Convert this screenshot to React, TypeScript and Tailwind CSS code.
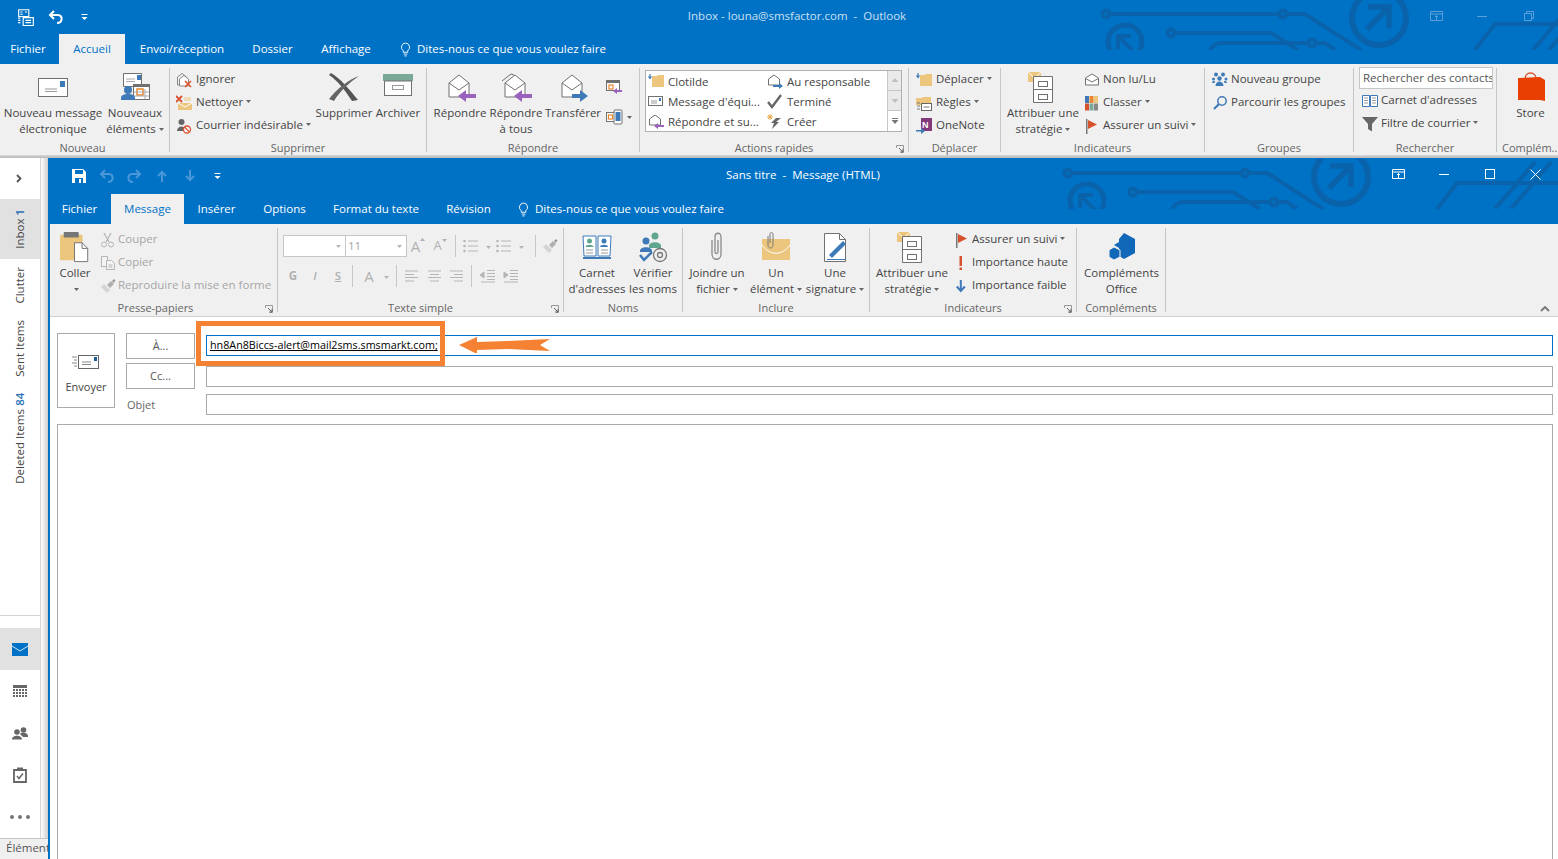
import type { ReactNode } from "react";

const BLUE = "#0072c6";
const INK = "#707070";
const TAN = "#ecc67c";
const STEEL = "#3f7ab8";
const PURPLE = "#9a62bd";
const RED = "#d8512e";

function S16({ children, className = "" }: { children: ReactNode; className?: string }) {
  return <svg viewBox="0 0 16 16" className={`h-[16px] w-[16px] shrink-0 ${className}`}>{children}</svg>;
}
function S32({ children, className = "" }: { children: ReactNode; className?: string }) {
  return <svg viewBox="0 0 32 32" className={`h-[32px] w-[32px] shrink-0 ${className}`}>{children}</svg>;
}

function Caret({ color = "#666" }: { color?: string }) {
  return (
    <svg viewBox="0 0 5 3" className="ml-[3px] inline-block h-[3px] w-[5px] align-middle">
      <path d="M0 0h5L2.500 3z" fill={color} />
    </svg>
  );
}

// ============================ Big icons ============================

const Envelope32 = () => (
  <S32>
    <rect x="1.500" y="7.500" width="29" height="18" fill="#fff" stroke={INK} />
    <rect x="23" y="10" width="5" height="6" fill={STEEL} />
    <path d="M8 18h12M8 20.500h12" stroke="#999" />
  </S32>
);
const NewItems32 = () => (
  <S32>
    <path d="M4.500 2.500h18v13h-18z" fill="#fff" stroke={INK} />
    <rect x="18" y="4" width="4" height="5" fill={STEEL} />
    <path d="M7 8h9M7 10.500h9" stroke="#aaa" />
    <rect x="14.500" y="13.500" width="16" height="15" fill="#fff" stroke={INK} />
    <rect x="14" y="13" width="17" height="3" fill={INK} />
    <rect x="18" y="18" width="6" height="6" fill="none" stroke="#e8852f" strokeWidth="1.500" />
    <path d="M26 18v10M15 21h15M15 25h15" stroke="#aaa" />
    <circle cx="9" cy="19" r="4" fill={STEEL} />
    <path d="M2 29v-2c0-3 3-4 7-4s7 1 7 4v2z" fill={STEEL} />
  </S32>
);
const DeleteX = () => (
  <S32>
    <path d="M3 2c9 5 19 17 27 27l-6 1C17 19 9 9 1 4z" fill="#555" />
    <path d="M31 5C21 8 9 18 1 28l5 2C12 20 22 11 31 5z" fill="#666" />
  </S32>
);
const Archive32 = () => (
  <S32>
    <rect x="1" y="3" width="30" height="7" fill="#7aa998" />
    <rect x="2.500" y="10" width="27" height="14.500" fill="#fff" stroke={INK} />
    <rect x="10.500" y="14.500" width="11" height="4" fill="none" stroke="#999" />
  </S32>
);
function OpenEnv({ extra = false }: { extra?: boolean }) {
  return (
    <>
      {extra && <path d="M2 10l9-7 3 1" fill="none" stroke={INK} />}
      <path d="M5 12l10-8 10 8v14H5z" fill="#fff" stroke={INK} />
      <path d="M5 12l10 7 10-7" fill="none" stroke={INK} />
    </>
  );
}
const ReplyIcon = ({ extra = false }: { extra?: boolean }) => (
  <S32>
    <OpenEnv extra={extra} />
    <path d="M14 25l8-6v4h10v4H22v4z" fill={PURPLE} />
  </S32>
);
const ForwardIcon = () => (
  <S32>
    <OpenEnv />
    <path d="M31 25l-8-6v4H15v4h8v4z" fill={STEEL} />
  </S32>
);
const Book32 = () => (
  <S32>
    <path d="M2 5h13v20H3z" fill="#fff" stroke={STEEL} />
    <path d="M17 5h13l-1 20H17z" fill="#fff" stroke={STEEL} />
    <path d="M2 26h28v2H2z" fill={STEEL} />
    <circle cx="8.500" cy="10" r="2.500" fill="#5fa58f" />
    <path d="M4.500 16c0-3 8-3 8 0z" fill="#5fa58f" />
    <circle cx="23" cy="10" r="2.500" fill={STEEL} />
    <path d="M19 16c0-3 8-3 8 0z" fill={STEEL} />
    <path d="M5 19h7M5 22h7M20 19h7M20 22h7" stroke="#999" />
  </S32>
);
const CheckNames = () => (
  <S32>
    <circle cx="18" cy="5" r="3.500" fill="#5fa58f" />
    <path d="M12 15c0-5 12-5 12 0v2H12z" fill="#5fa58f" />
    <circle cx="9" cy="10" r="3.500" fill={STEEL} />
    <path d="M3 20c0-5 12-5 12 0v1H3z" fill={STEEL} />
    <path d="M3 24l4 5 8-8" fill="none" stroke={STEEL} strokeWidth="2.500" />
    <circle cx="23" cy="24" r="6.500" fill="none" stroke="#777" strokeWidth="1.300" />
    <circle cx="23" cy="24" r="2.500" fill="none" stroke="#777" strokeWidth="1.300" />
  </S32>
);
const Clip32 = () => (
  <S32>
    <path d="M11 9v14c0 7 9 7 9 0V6c0-5-6-5-6 0v15c0 2 3 2 3 0V9" fill="none" stroke="#8a8a8a" strokeWidth="1.300" />
  </S32>
);
const ItemEnv = () => (
  <S32>
    <rect x="2" y="8" width="28" height="21" fill={TAN} />
    <path d="M2 14c8 11 20 11 28 0" fill="none" stroke="#fff" />
    <path d="M8 5v9c0 4 5 4 5 0V3c0-2-3-2-3 0v9" fill="none" stroke="#7a7a7a" />
  </S32>
);
const Signature = () => (
  <S32>
    <path d="M5.500 2.500h15l6 6v22h-21z" fill="#fff" stroke={INK} />
    <path d="M20.500 2.500v6h6" fill="none" stroke={INK} />
    <path d="M10 24L24 10l3 3-14 14z" fill={STEEL} />
    <path d="M8 28.500h18" stroke={STEEL} />
  </S32>
);
const Policy = () => (
  <S32>
    <rect x="1" y="1" width="13" height="10" fill={TAN} />
    <path d="M1 1l6.500 6L14 1" fill="none" stroke="#fff" />
    <path d="M6.500 5.500h19v26h-19z" fill="#fff" stroke={INK} />
    <path d="M6.500 18.500h19" stroke={INK} />
    <rect x="11.500" y="10.500" width="9" height="5" fill="none" stroke={INK} />
    <rect x="11.500" y="23.500" width="9" height="5" fill="none" stroke={INK} />
  </S32>
);
const AddIn = () => (
  <S32>
    <path d="M18 2l11 6v14l-11 6-5-3v-8l-5-3 5-3V8z" fill="#1268b8" />
    <path d="M8 16l6 3v7l-6 3-5-3v-7z" fill="#1268b8" stroke="#f0f0f0" />
  </S32>
);
const StoreBag = () => (
  <S32>
    <path d="M10 8c0-8 11-8 11 0" fill="none" stroke={RED} strokeWidth="1.500" />
    <path d="M3 7l22-1 5 3v21l-5-1H3z" fill="#e93f02" />
  </S32>
);
const Paste = () => (
  <svg viewBox="0 0 34 34" className="h-[32px] w-[32px]">
    <rect x="1" y="4" width="24" height="27" rx="1" fill={TAN} />
    <rect x="5" y="1" width="16" height="6" rx="1" fill="#777" />
    <path d="M16.500 12.500h8l6 6v14h-14z" fill="#fff" stroke={INK} />
    <path d="M24.500 12.500v6h6" fill="none" stroke={INK} />
  </svg>
);

// ============================ Small icons ============================

const Ignore = () => (
  <S16>
    <path d="M1.500 5L6 1.500 10.500 5v8h-9z" fill="none" stroke="#888" />
    <path d="M3.500 7L8 3.500 12.500 7v7h-9z" fill="#fff" stroke="#888" />
    <path d="M9 9l6 6M15 9l-6 6" stroke={RED} strokeWidth="1.600" />
  </S16>
);
const CleanUp = () => (
  <S16>
    <path d="M0 1l6 6M6 1L0 7" stroke={RED} strokeWidth="1.800" />
    <path d="M8 3h7M8 5h7" stroke={TAN} />
    <rect x="2" y="8" width="14" height="7" fill={TAN} />
    <path d="M2 8l7 4 7-4" fill="none" stroke="#fff" />
  </S16>
);
const Junk = () => (
  <S16>
    <circle cx="5.500" cy="4" r="3" fill="#666" />
    <path d="M1 13c0-6 9-6 9 0z" fill="#666" />
    <circle cx="11" cy="11.500" r="3.500" fill="#fff" stroke={RED} strokeWidth="1.300" />
    <path d="M8.500 9l5 5" stroke={RED} strokeWidth="1.300" />
  </S16>
);
const Folder = () => (
  <>
    <path d="M4 3h5l1-1h6v12H4z" fill={TAN} />
    <path d="M2 1v4M0.500 3.500L2 5.500l1.500-2" fill="none" stroke={STEEL} strokeWidth="1.200" />
  </>
);
const Move = () => <S16><Folder /></S16>;
const Rules = () => (
  <S16>
    <path d="M0 3h6l1-1h8v8H0z" fill={TAN} />
    <rect x="5.500" y="8.500" width="10" height="7" fill="#fff" stroke="#666" />
    <path d="M7.500 12h6M1 8h3M1 11h3M1 14h3" stroke="#777" />
  </S16>
);
const OneNote = () => (
  <S16>
    <rect x="5" y="0" width="11" height="13" fill="#80397b" />
    <text x="6" y="10" fontSize="9" fontWeight="700" fill="#fff" fontFamily="Liberation Sans, sans-serif">N</text>
    <path d="M0 12h5V9.500L9 13l-4 3v-2.500H0z" fill={STEEL} />
  </S16>
);
const Unread = () => (
  <S16>
    <path d="M1.500 6L8 2l6.500 4v7h-13z" fill="#fff" stroke={INK} />
    <path d="M1.500 6.500L8 10l6.500-3.500" fill="none" stroke={INK} />
  </S16>
);
const Categorize = () => (
  <S16>
    <rect x="1" y="1" width="4" height="7" fill={STEEL} />
    <rect x="5.500" y="1" width="4" height="7" fill="#e8852f" />
    <rect x="10" y="1" width="4" height="7" fill={TAN} />
    <rect x="1" y="8.500" width="4" height="7" fill={RED} />
    <rect x="5.500" y="8.500" width="4" height="7" fill="#7aa998" />
    <rect x="10" y="8.500" width="4" height="7" fill="#888" />
  </S16>
);
const Flag = () => (
  <S16>
    <rect x="2" y="1" width="1.500" height="15" fill="#777" />
    <path d="M4 2l9 4.500L4 11z" fill={RED} />
  </S16>
);
const NewGroup = () => (
  <S16>
    <circle cx="4" cy="2.500" r="2" fill={STEEL} />
    <circle cx="11" cy="2.500" r="2" fill={STEEL} />
    <circle cx="1.500" cy="7" r="1.500" fill={STEEL} />
    <circle cx="14" cy="7" r="1.500" fill={STEEL} />
    <circle cx="7.500" cy="6.500" r="2.200" fill={STEEL} />
    <path d="M3.500 14c0-6 8-6 8 0zM0 11c0-2 3-2.500 3-1.500L2.500 11zM15 11c0-2-3-2.500-3-1.500l.5 1.500z" fill={STEEL} />
  </S16>
);
const Browse = () => (
  <S16>
    <circle cx="10" cy="6" r="4.200" fill="none" stroke={STEEL} strokeWidth="1.500" />
    <path d="M7 9l-5 5" stroke={STEEL} strokeWidth="2.200" />
  </S16>
);
const BookSmall = () => (
  <S16>
    <path d="M0.500 2.500h7v11h-7zM8.500 2.500h7v11h-7z" fill="#fff" stroke={STEEL} />
    <path d="M2 5h4M2 7.500h4M2 10h4M10 5h4M10 7.500h4M10 10h4" stroke="#999" />
  </S16>
);
const Funnel = () => (
  <S16>
    <path d="M0 1h16L10 8v7.500L6 13V8z" fill="#666" />
  </S16>
);
const Cut = () => (
  <S16>
    <path d="M4 1l5 9M11 1L6 10" stroke="#b5b5b5" strokeWidth="1.300" />
    <circle cx="4" cy="12.500" r="2.500" fill="none" stroke="#b5b5b5" />
    <circle cx="11" cy="12.500" r="2.500" fill="none" stroke="#b5b5b5" />
  </S16>
);
const CopyIcon = () => (
  <S16>
    <path d="M1.500 1.500h6v10h-6z" fill="#f4f4f4" stroke="#b5b5b5" />
    <path d="M6.500 5.500h5l3 3v6h-8z" fill="#f4f4f4" stroke="#b5b5b5" />
    <path d="M8.500 10h4M8.500 12h4" stroke="#b5b5b5" />
  </S16>
);
const Painter = () => (
  <S16>
    <path d="M1 9l6 6 3-3-6-6z" fill="#d4d4d4" />
    <path d="M7 7l4-4 3 3-4 4z" fill="#b0b0b0" />
    <path d="M12 3l2-2 1.500 1.500L13.500 5z" fill="#999" />
  </S16>
);
const ExMark = () => (
  <S16>
    <rect x="5.500" y="1" width="2.500" height="10" fill={RED} />
    <rect x="5.500" y="12.500" width="2.500" height="2.500" fill={RED} />
  </S16>
);
const DownBlue = () => (
  <S16>
    <path d="M6.800 2v10M2.800 8.500l4 4.500 4-4.500" fill="none" stroke={STEEL} strokeWidth="2" />
  </S16>
);
const QuickFolder = () => <S16><Folder /></S16>;
const MiniEnv = () => (
  <S16>
    <rect x="0.500" y="3.500" width="14" height="9" fill="#fff" stroke={INK} />
    <path d="M3 8h6M3 10h6" stroke="#999" />
    <rect x="11" y="5" width="2" height="3" fill={STEEL} />
  </S16>
);
const QReply = () => (
  <S16>
    <path d="M1.500 6L7 2l5.500 4v6h-11z" fill="#fff" stroke={INK} />
    <path d="M6 13l4-3v2h6v2h-6v2z" fill={PURPLE} />
  </S16>
);
const QForward = () => (
  <S16>
    <path d="M1.500 6L7 2l5.500 4v6h-11z" fill="#fff" stroke={INK} />
    <path d="M16 13l-4-3v2H6v2h6v2z" fill={STEEL} />
  </S16>
);
const Check = () => (
  <S16>
    <path d="M1 9l4 5L14 2" fill="none" stroke="#666" strokeWidth="2.400" />
  </S16>
);
const Bolt = () => (
  <S16>
    <path d="M9 5h5l-5 4h3l-7 7 2-6H4z" fill="#666" />
    <path d="M3 1v6M0 4h6M1 2l4 4M5 2L1 6" stroke="#e8a94a" />
  </S16>
);
const MeetingReply = () => (
  <svg viewBox="0 0 16 16" className="h-[16px] w-[16px]">
    <rect x="0.500" y="1.500" width="13" height="10" fill="#fff" stroke={INK} />
    <rect x="0" y="1" width="14" height="3" fill={INK} />
    <rect x="3" y="6" width="4" height="4" fill="none" stroke="#e8852f" strokeWidth="1.200" />
    <path d="M7 12l4-3v2h5v2h-5v2z" fill={PURPLE} />
  </svg>
);
const MoreReply = () => (
  <svg viewBox="0 0 18 16" className="h-[16px] w-[18px]">
    <rect x="0.500" y="3.500" width="9" height="9" fill="#fff" stroke={INK} />
    <rect x="2.500" y="6" width="4" height="4" fill="none" stroke="#e8852f" strokeWidth="1.200" />
    <rect x="8" y="1" width="8" height="14" rx="1" fill="#fff" stroke={INK} />
    <rect x="9.500" y="3" width="5" height="9" fill={STEEL} />
  </svg>
);

// ============================ Window chrome ============================

function Circuit({ className }: { className: string }) {
  return (
    <svg viewBox="1098 0 502 50" className={`pointer-events-none absolute h-[50px] w-[502px] ${className}`} fill="none" stroke="#0a63aa" strokeWidth="4">
      <circle cx="1106" cy="14" r="3.500" />
      <path d="M1110 14h169M1287 14h18l56 36" />
      <circle cx="1283" cy="14" r="3.500" />
      <circle cx="1379" cy="18" r="27" strokeWidth="6" />
      <path d="M1368 7h21v21M1389 7l-22 22" strokeWidth="5.500" />
      <circle cx="1125" cy="42" r="17" strokeWidth="5" />
      <path d="M1131 36h-13v13M1118 36l16 16" strokeWidth="4" />
      <circle cx="1171" cy="33" r="3.500" />
      <path d="M1175 33h96l27 17" />
      <path d="M1210 50c3-5 6-7 11-7h87" />
      <circle cx="1312" cy="43" r="3.500" />
      <path d="M1316 43h9l10 7" />
      <path d="M1475 50l20-26h105" />
      <path d="M1533 50l40-47M1549 50l40-47" />
    </svg>
  );
}

function Tab({ children, className }: { children: ReactNode; className: string }) {
  return <div className={`flex h-full items-center whitespace-nowrap ${className}`}>{children}</div>;
}

const Bulb = () => (
  <svg viewBox="0 0 12 16" className="mr-[6px] h-[15px] w-[11px]">
    <path d="M6 1a4.500 4.500 0 0 0-2.500 8.200V11h5V9.200A4.500 4.500 0 0 0 6 1zM4 13h4M4.800 15h2.400" fill="none" stroke="#fff" />
  </svg>
);

const CustomizeGlyph = () => (
  <svg viewBox="0 0 7 6" className="h-[6px] w-[7px]">
    <path d="M0.500 0.500h6" stroke="#fff" />
    <path d="M0.500 3h6L3.500 6z" fill="#fff" />
  </svg>
);

// ============================ Ribbon parts ============================

function Group({ className, label, labelClass = "", launcher = false, children }: {
  className: string;
  label: string;
  labelClass?: string;
  launcher?: boolean;
  children: ReactNode;
}) {
  return (
    <div className={`relative mt-[4px] flex h-[84px] shrink-0 flex-col border-r border-[#c6c6c6] ${className}`}>
      <div className="flex h-[72px] shrink-0">{children}</div>
      <div className={`h-[16px] shrink-0 whitespace-nowrap text-center text-[11px] leading-[15px] text-[#666] ${labelClass}`}>{label}</div>
      {launcher && (
        <svg viewBox="0 0 8 8" className="absolute bottom-[-1px] right-[4px] h-[8px] w-[8px]">
          <path d="M0.500 3V0.500H7.500V7.500H5" fill="none" stroke="#999" />
          <path d="M3 3l4 4M7 4v3H4" fill="none" stroke="#666" />
        </svg>
      )}
    </div>
  );
}

function Big({ icon, top, bottom, caret, className }: {
  icon: ReactNode;
  top: string;
  bottom?: string;
  caret?: boolean;
  className: string;
}) {
  return (
    <div className={`flex shrink-0 flex-col items-center whitespace-nowrap text-[#444] ${className}`}>
      <div className="flex h-[37px] items-center">{icon}</div>
      <div className="h-[16px] leading-[16px]">{top}</div>
      {(bottom || caret) && (
        <div className="flex h-[16px] items-center leading-[16px]">
          {bottom}
          {caret && <Caret />}
        </div>
      )}
    </div>
  );
}

function Small({ icon, text, caret, tone = "text-[#444]", gap = "gap-[4px]" }: {
  icon: ReactNode;
  text: string;
  caret?: boolean;
  tone?: string;
  gap?: string;
}) {
  return (
    <div className={`flex h-[23px] items-center whitespace-nowrap ${gap} ${tone}`}>
      {icon}
      <span className="flex items-center pb-[2px]">
        {text}
        {caret && <Caret />}
      </span>
    </div>
  );
}

function Quick({ icon, text }: { icon: ReactNode; text: string }) {
  return (
    <div className="flex h-[20px] items-center gap-[4px] whitespace-nowrap text-[#444]">
      {icon}
      <span className="pt-[1px]">{text}</span>
    </div>
  );
}

function ScrollCell({ up, more }: { up?: boolean; more?: boolean }) {
  return (
    <div className={`flex h-[20px] items-center justify-center ${more ? "bg-white" : "border-b border-[#c6c6c6] bg-[#eaeaea]"}`}>
      <svg viewBox="0 0 8 7" className="h-[7px] w-[8px]">
        {more && <path d="M1 0.500h6" stroke="#777" />}
        <path d={up ? "M4 1l3.500 4H0.500z" : "M0.500 2h7L4 6z"} fill={more ? "#777" : "#c0c0c0"} />
      </svg>
    </div>
  );
}

const Sep = () => <div className="h-[22px] w-px shrink-0 bg-[#c6c6c6]" />;

function Lines({ kind }: { kind: "left" | "center" | "right" | "bullets" | "numbers" | "outdent" | "indent" }) {
  const rows = [2, 5.5, 8.5, 12];
  return (
    <svg viewBox="0 0 15 14" className="h-[14px] w-[15px] shrink-0" stroke="#b5b5b5">
      {kind === "left" && rows.map((y, i) => <path key={y} d={`M1 ${y}h${i % 2 ? 9 : 13}`} />)}
      {kind === "center" && rows.map((y, i) => <path key={y} d={`M${i % 2 ? 3 : 1} ${y}h${i % 2 ? 9 : 13}`} />)}
      {kind === "right" && rows.map((y, i) => <path key={y} d={`M${i % 2 ? 5 : 1} ${y}h${i % 2 ? 9 : 13}`} />)}
      {(kind === "bullets" || kind === "numbers") && [2, 7, 12].map((y) => (
        <g key={y}>
          <circle cx="1.500" cy={y} r="1.300" fill="#b5b5b5" stroke="none" />
          <path d={`M5 ${y}h10`} />
        </g>
      ))}
      {(kind === "outdent" || kind === "indent") && (
        <>
          <path d="M7 1.500h8M7 4.500h8M7 7.500h8M7 10.500h8M1 13h14" />
          <path d={kind === "outdent" ? "M0 6l4-3v6z" : "M5 6L1 3v6z"} fill="#b5b5b5" />
        </>
      )}
    </svg>
  );
}

const Dim = ({ children, className = "" }: { children: ReactNode; className?: string }) => (
  <span className={`text-center text-[#b0b0b0] ${className}`}>{children}</span>
);

function FontStep({ size, up }: { size: string; up?: boolean }) {
  return (
    <span className={`flex w-[22px] items-start justify-center font-medium text-[#b0b0b0] ${size}`}>
      A
      <svg viewBox="0 0 5 3" className="mt-[3px] h-[3px] w-[5px]">
        <path d={up ? "M2.500 0L5 3H0z" : "M0 0h5L2.500 3z"} fill="#b0b0b0" />
      </svg>
    </span>
  );
}

// ============================ Sidebar ============================

function VTab({ children, className }: { children: ReactNode; className: string }) {
  return (
    <div className={`flex items-center justify-center ${className}`}>
      <span className="rotate-180 whitespace-nowrap text-[#444] [writing-mode:vertical-rl]">{children}</span>
    </div>
  );
}

function Sidebar() {
  return (
    <div className="flex w-[48px] shrink-0 flex-col">
      <div className="flex min-h-0 flex-1">
        <div className="flex w-[41px] flex-col border-r border-[#d4d4d4]">
          <div className="flex h-[41px] items-center justify-center pr-[3px]">
            <svg viewBox="0 0 6 9" className="h-[9px] w-[6px]">
              <path d="M1 1l3.500 3.500L1 8" fill="none" stroke="#555" strokeWidth="1.800" />
            </svg>
          </div>
          <VTab className="h-[60px] bg-[#e1e1e1]">
            Inbox <span className="ml-[4px] font-semibold text-[#2a6fb5]">1</span>
          </VTab>
          <VTab className="h-[53px]">Clutter</VTab>
          <VTab className="h-[72px]">Sent Items</VTab>
          <VTab className="h-[108px]">
            Deleted Items <span className="ml-[4px] font-semibold text-[#2a6fb5]">84</span>
          </VTab>
          <div className="flex-1" />
          <div className="border-t border-[#d4d4d4] pt-[12px]">
            <div className="flex h-[42px] items-center justify-center bg-[#e1e1e1]">
              <svg viewBox="0 0 16 13" className="h-[13px] w-[16px]">
                <rect width="16" height="13" fill={BLUE} />
                <path d="M0 3l8 5 8-5" fill="none" stroke="#cfe3f5" />
              </svg>
            </div>
            <div className="flex h-[42px] items-center justify-center">
              <svg viewBox="0 0 14 12" className="h-[12px] w-[14px]" fill="#666">
                <rect width="14" height="3" />
                {[4, 7, 10].map((y) => [0, 3, 6, 9, 12].map((x) => <rect key={`${x}-${y}`} x={x} y={y} width="2" height="2" />))}
              </svg>
            </div>
            <div className="flex h-[42px] items-center justify-center">
              <svg viewBox="0 0 16 13" className="h-[13px] w-[16px]" fill="#666">
                <circle cx="5" cy="5" r="2.800" />
                <circle cx="11.500" cy="3" r="2.800" />
                <path d="M0 12.500c0-5 10-5 10 0zM8 7c1-2 8-2 8 2v1h-5z" />
              </svg>
            </div>
            <div className="flex h-[42px] items-center justify-center">
              <svg viewBox="0 0 14 16" className="h-[16px] w-[14px]">
                <path d="M1 3h12v12H1z" fill="none" stroke="#666" strokeWidth="1.800" />
                <rect x="4" y="0.500" width="6" height="3.500" fill="#666" />
                <path d="M4 9l2 2.500L10 6.500" fill="none" stroke="#666" strokeWidth="1.500" />
              </svg>
            </div>
            <div className="flex h-[42px] items-center justify-center gap-[4px]">
              <span className="h-[4px] w-[4px] rounded-full bg-[#777]" />
              <span className="h-[4px] w-[4px] rounded-full bg-[#777]" />
              <span className="h-[4px] w-[4px] rounded-full bg-[#777]" />
            </div>
          </div>
        </div>
        <div className="w-[7px] bg-gradient-to-r from-white to-[#cfcfcf]" />
      </div>
      <div className="h-[21px] overflow-hidden whitespace-nowrap border-t border-[#c6c6c6] bg-[#f0f0f0] pl-[6px] leading-[17px] text-[#555]">Éléments</div>
    </div>
  );
}

// ============================ Windows ============================

function OuterWindow() {
  return (
    <>
      <div className="relative h-[64px] shrink-0 overflow-hidden bg-[#0072c6] text-white">
        <Circuit className="right-[-42px] top-0" />
        <div className="relative flex h-[34px] items-center">
          <div className="flex w-[181px] items-center pl-[11px]">
            <div className="flex w-[30px] justify-center">
              <svg viewBox="0 0 16 16" className="h-[18px] w-[18px]" fill="none" stroke="#fff">
                <path d="M1.500 1.500h9v6h-9zM3 3.500h2M7 3.500h2M3 5.500h2" />
                <path d="M5.500 8.500h9v7h-9zM7.500 11h5M7.500 13h5M1 9h2M1 11h2M1 13h2" />
              </svg>
            </div>
            <div className="flex w-[30px] justify-center">
              <svg viewBox="0 0 16 14" className="h-[14px] w-[16px]" fill="none" stroke="#fff" strokeWidth="2">
                <path d="M6 1L2 5l4 4M2 5h8c5 0 5 8-1 8" />
              </svg>
            </div>
            <div className="flex w-[26px] justify-center"><CustomizeGlyph /></div>
          </div>
          <div className="flex-1 whitespace-pre pb-[2px] text-center text-[#cde0f1]">Inbox - louna@smsfactor.com  -  Outlook</div>
          <div className="flex w-[145px] items-center pb-[2px]">
            <div className="flex w-[46px] justify-center">
              <svg viewBox="0 0 13 10" className="h-[10px] w-[13px]" fill="none" stroke="#5c9fd8">
                <path d="M0.500 0.500h12v9h-12zM0.500 3h12M6.500 9V4.500M5 6l1.500-1.500L8 6" />
              </svg>
            </div>
            <div className="flex w-[46px] justify-center"><div className="h-px w-[10px] bg-[#5c9fd8]" /></div>
            <div className="flex w-[48px] justify-center">
              <svg viewBox="0 0 10 10" className="h-[10px] w-[10px]" fill="none" stroke="#5c9fd8">
                <path d="M0.500 2.500h7v7h-7zM2.500 2.500v-2h7v7h-2" />
              </svg>
            </div>
          </div>
        </div>
        <div className="relative flex h-[30px] items-center">
          <Tab className="w-[59px] justify-center pr-[3px]">Fichier</Tab>
          <Tab className="w-[66px] justify-center bg-[#f0f0f0] text-[#0072c6]">Accueil</Tab>
          <Tab className="w-[114px] justify-center">Envoi/réception</Tab>
          <Tab className="w-[67px] justify-center">Dossier</Tab>
          <Tab className="w-[80px] justify-center">Affichage</Tab>
          <Tab className="ml-[14px]"><Bulb />Dites-nous ce que vous voulez faire</Tab>
        </div>
      </div>
      <div className="flex h-[91px] shrink-0 bg-[#f0f0f0]">
        <Group className="w-[170px]" label="Nouveau" labelClass="pr-[4px]">
          <Big className="w-[106px]" icon={<Envelope32 />} top="Nouveau message" bottom="électronique" />
          <Big className="w-[58px]" icon={<NewItems32 />} top="Nouveaux" bottom="éléments" caret />
        </Group>
        <Group className="w-[257px]" label="Supprimer">
          <div className="w-[146px] pl-[6px]">
            <Small icon={<Ignore />} text="Ignorer" />
            <Small icon={<CleanUp />} text="Nettoyer" caret />
            <Small icon={<Junk />} text="Courrier indésirable" caret />
          </div>
          <Big className="w-[56px]" icon={<DeleteX />} top="Supprimer" />
          <Big className="w-[52px]" icon={<Archive32 />} top="Archiver" />
        </Group>
        <Group className="w-[213px]" label="Répondre">
          <div className="w-[5px]" />
          <Big className="w-[56px]" icon={<ReplyIcon />} top="Répondre" />
          <Big className="w-[56px]" icon={<ReplyIcon extra />} top="Répondre" bottom="à tous" />
          <Big className="w-[58px]" icon={<ForwardIcon />} top="Transférer" />
          <div className="flex w-[30px] flex-col items-start gap-[14px] pl-[4px] pt-[11px]">
            <MeetingReply />
            <div className="flex items-center"><MoreReply /><Caret /></div>
          </div>
        </Group>
        <Group className="w-[269px]" label="Actions rapides" launcher>
          <div className="ml-[5px] mt-[2px] flex h-[62px] w-[257px] border border-[#b0b0b0] bg-white">
            <div className="w-[121px] pl-[2px]">
              <Quick icon={<QuickFolder />} text="Clotilde" />
              <Quick icon={<MiniEnv />} text="Message d'équi..." />
              <Quick icon={<QReply />} text="Répondre et su..." />
            </div>
            <div className="w-[120px]">
              <Quick icon={<QForward />} text="Au responsable" />
              <Quick icon={<Check />} text="Terminé" />
              <Quick icon={<Bolt />} text="Créer" />
            </div>
            <div className="flex-1 border-l border-[#c6c6c6]">
              <ScrollCell up />
              <ScrollCell />
              <ScrollCell more />
            </div>
          </div>
        </Group>
        <Group className="w-[92px]" label="Déplacer">
          <div className="pl-[7px]">
            <Small icon={<Move />} text="Déplacer" caret />
            <Small icon={<Rules />} text="Règles" caret />
            <Small icon={<OneNote />} text="OneNote" />
          </div>
        </Group>
        <Group className="w-[204px]" label="Indicateurs">
          <div className="w-[4px]" />
          <Big className="w-[76px]" icon={<Policy />} top="Attribuer une" bottom="stratégie" caret />
          <div className="pl-[3px]">
            <Small icon={<Unread />} text="Non lu/Lu" gap="gap-[3px]" />
            <Small icon={<Categorize />} text="Classer" caret gap="gap-[3px]" />
            <Small icon={<Flag />} text="Assurer un suivi" caret gap="gap-[3px]" />
          </div>
        </Group>
        <Group className="w-[149px]" label="Groupes">
          <div className="pl-[7px]">
            <Small icon={<NewGroup />} text="Nouveau groupe" gap="gap-[3px]" />
            <Small icon={<Browse />} text="Parcourir les groupes" gap="gap-[3px]" />
          </div>
        </Group>
        <Group className="w-[143px]" label="Rechercher">
          <div className="pl-[5px]">
            <div className="-mt-[1px] flex h-[22px] w-[134px] items-center overflow-hidden whitespace-nowrap border border-[#c6c6c6] bg-white pl-[3px] text-[#555]">Rechercher des contacts</div>
            <div className="pl-[3px]">
              <Small icon={<BookSmall />} text="Carnet d'adresses" gap="gap-[3px]" />
              <Small icon={<Funnel />} text="Filtre de courrier" caret gap="gap-[3px]" />
            </div>
          </div>
        </Group>
        <Group className="flex-1 border-r-0" label="Complém..." labelClass="pl-[5px] text-[10.5px]">
          <Big className="w-[61px] pl-[6px]" icon={<StoreBag />} top="Store" />
        </Group>
      </div>
      <div className="h-[3px] shrink-0 bg-gradient-to-b from-[#d8d8d8] to-[#b8b8b8]" />
    </>
  );
}

function ComposeRibbon() {
  return (
    <div className="relative flex h-[93px] shrink-0 border-b border-[#d0d0d0] bg-[#f0f0f0]">
      <Group className="w-[228px]" label="Presse-papiers" labelClass="pr-[16px]" launcher>
        <div className="ml-[4px] flex w-[42px] flex-col items-center text-[#444]">
          <div className="flex h-[37px] items-center"><Paste /></div>
          <div className="h-[16px] leading-[16px]">Coller</div>
          <div className="flex h-[16px] items-center"><Caret /></div>
        </div>
        <div className="pl-[4px]">
          <Small icon={<Cut />} text="Couper" tone="text-[#a6a6a6]" gap="gap-[2px]" />
          <Small icon={<CopyIcon />} text="Copier" tone="text-[#a6a6a6]" gap="gap-[2px]" />
          <Small icon={<Painter />} text="Reproduire la mise en forme" tone="text-[#a6a6a6]" gap="gap-[2px]" />
        </div>
      </Group>
      <Group className="w-[286px]" label="Texte simple" launcher>
        <div className="pl-[5px] pt-[7px]">
          <div className="flex h-[22px] items-center">
            <div className="flex h-[22px] w-[63px] items-center justify-end border border-[#c6c6c6] bg-white pr-[4px]"><Caret color="#b5b5b5" /></div>
            <div className="-ml-px flex h-[22px] w-[62px] items-center justify-between border border-[#c6c6c6] bg-white pl-[2px] pr-[4px] text-[#a6a6a6]">11<Caret color="#b5b5b5" /></div>
            <FontStep size="text-[15px]" up />
            <FontStep size="text-[13px]" />
            <div className="ml-[4px] mr-[7px]"><Sep /></div>
            <Lines kind="bullets" />
            <span className="w-[18px] text-center"><Caret color="#b5b5b5" /></span>
            <Lines kind="numbers" />
            <span className="w-[18px] text-center"><Caret color="#b5b5b5" /></span>
            <div className="mx-[6px]"><Sep /></div>
            <Painter />
          </div>
          <div className="mt-[8px] flex h-[22px] items-center pl-[2px]">
            <Dim className="w-[16px] font-bold">G</Dim>
            <Dim className="ml-[6px] w-[16px] font-semibold italic">I</Dim>
            <Dim className="ml-[7px] w-[16px] font-semibold underline">S</Dim>
            <div className="ml-[6px] mr-[8px]"><Sep /></div>
            <Dim className="w-[16px] text-[15px] font-medium">A</Dim>
            <span className="w-[16px] text-center"><Caret color="#b5b5b5" /></span>
            <div className="ml-[3px] mr-[7px]"><Sep /></div>
            <Lines kind="left" />
            <div className="w-[8px]" />
            <Lines kind="center" />
            <div className="w-[7px]" />
            <Lines kind="right" />
            <div className="ml-[7px] mr-[8px]"><Sep /></div>
            <Lines kind="outdent" />
            <div className="w-[8px]" />
            <Lines kind="indent" />
          </div>
        </div>
      </Group>
      <Group className="w-[119px]" label="Noms">
        <div className="w-[6px]" />
        <Big className="w-[54px]" icon={<Book32 />} top="Carnet" bottom="d'adresses" />
        <Big className="w-[58px]" icon={<CheckNames />} top="Vérifier" bottom="les noms" />
      </Group>
      <Group className="w-[187px]" label="Inclure">
        <div className="w-[2px]" />
        <Big className="w-[64px]" icon={<Clip32 />} top="Joindre un" bottom="fichier" caret />
        <Big className="w-[54px]" icon={<ItemEnv />} top="Un" bottom="élément" caret />
        <Big className="w-[64px]" icon={<Signature />} top="Une" bottom="signature" caret />
      </Group>
      <Group className="w-[207px]" label="Indicateurs" launcher>
        <div className="w-[4px]" />
        <Big className="w-[76px]" icon={<Policy />} top="Attribuer une" bottom="stratégie" caret />
        <div className="pl-[4px]">
          <Small icon={<Flag />} text="Assurer un suivi" caret gap="gap-[2px]" />
          <Small icon={<ExMark />} text="Importance haute" gap="gap-[2px]" />
          <Small icon={<DownBlue />} text="Importance faible" gap="gap-[2px]" />
        </div>
      </Group>
      <Group className="w-[89px]" label="Compléments">
        <Big className="w-[89px]" icon={<AddIn />} top="Compléments" bottom="Office" />
      </Group>
      <svg viewBox="0 0 10 6" className="absolute bottom-[4px] right-[8px] h-[6px] w-[10px]">
        <path d="M1 5l4-4 4 4" fill="none" stroke="#777" strokeWidth="1.800" />
      </svg>
    </div>
  );
}

function ComposeWindow() {
  return (
    <div className="flex min-w-0 flex-1 flex-col border-l-2 border-[#0072c6] bg-white">
      <div className="relative h-[66px] shrink-0 overflow-hidden bg-[#0072c6] text-white">
        <Circuit className="right-[-4px] top-[1px]" />
        <div className="relative flex h-[36px] items-center">
          <div className="flex w-[181px] items-center pl-[15px]">
            <div className="flex w-[29px] justify-center">
              <svg viewBox="0 0 14 14" className="h-[14px] w-[14px]">
                <path d="M0 0h11l3 3v11H0z" fill="#fff" />
                <rect x="3" y="1" width="8" height="4" fill={BLUE} />
                <rect x="3" y="9" width="8" height="5" fill={BLUE} />
                <rect x="7" y="10" width="2" height="4" fill="#fff" />
              </svg>
            </div>
            <div className="flex w-[29px] justify-center">
              <svg viewBox="0 0 16 14" className="h-[14px] w-[16px]" fill="none" stroke="#4a98d8" strokeWidth="2">
                <path d="M6 1L2 5l4 4M2 5h8c5 0 5 8-1 8" />
              </svg>
            </div>
            <div className="flex w-[29px] justify-center">
              <svg viewBox="0 0 16 14" className="h-[14px] w-[16px]" fill="none" stroke="#4a98d8" strokeWidth="2">
                <path d="M10 1l4 4-4 4M14 5H6c-5 0-5 8 1 8" />
              </svg>
            </div>
            <div className="flex w-[29px] justify-center">
              <svg viewBox="0 0 12 12" className="h-[12px] w-[12px]" fill="none" stroke="#4a98d8" strokeWidth="2">
                <path d="M6 12V2M2 6l4-4 4 4" />
              </svg>
            </div>
            <div className="flex w-[29px] justify-center">
              <svg viewBox="0 0 12 12" className="h-[12px] w-[12px]" fill="none" stroke="#4a98d8" strokeWidth="2">
                <path d="M6 0v10M2 6l4 4 4-4" />
              </svg>
            </div>
            <div className="flex w-[29px] justify-center"><CustomizeGlyph /></div>
          </div>
          <div className="flex-1 whitespace-pre pb-[3px] text-center">Sans titre  -  Message (HTML)</div>
          <div className="flex w-[183px] items-center pb-[4px]">
            <div className="flex w-[46px] justify-center">
              <svg viewBox="0 0 13 10" className="h-[10px] w-[13px]" fill="none" stroke="#fff">
                <path d="M0.500 0.500h12v9h-12zM0.500 3h12M6.500 9V4.500M5 6l1.500-1.500L8 6" />
              </svg>
            </div>
            <div className="flex w-[46px] justify-center"><div className="h-px w-[10px] bg-white" /></div>
            <div className="flex w-[46px] justify-center"><div className="h-[10px] w-[10px] border border-white" /></div>
            <div className="flex w-[45px] justify-center">
              <svg viewBox="0 0 11 11" className="h-[11px] w-[11px]" stroke="#fff">
                <path d="M0.500 0.500l10 10M10.500 0.500l-10 10" />
              </svg>
            </div>
          </div>
        </div>
        <div className="relative flex h-[30px] items-center">
          <Tab className="w-[61px] justify-center pr-[2px]">Fichier</Tab>
          <Tab className="w-[73px] justify-center bg-[#f0f0f0] text-[#0072c6]">Message</Tab>
          <Tab className="w-[65px] justify-center">Insérer</Tab>
          <Tab className="w-[71px] justify-center">Options</Tab>
          <Tab className="w-[112px] justify-center">Format du texte</Tab>
          <Tab className="w-[73px] justify-center">Révision</Tab>
          <Tab className="ml-[13px]"><Bulb />Dites-nous ce que vous voulez faire</Tab>
        </div>
      </div>
      <ComposeRibbon />
      <div className="relative flex min-h-0 flex-1 flex-col pl-[7px] pr-[5px] pt-[16px]">
        <div className="flex h-[91px] shrink-0">
          <div className="flex h-[75px] w-[58px] flex-col items-center border border-[#ababab] pt-[20px] text-[11px] text-[#444]">
            <svg viewBox="0 0 28 16" className="h-[16px] w-[28px]">
              <rect x="6.500" y="1.500" width="20" height="13" fill="#fff" stroke="#666" />
              <rect x="22" y="3" width="3" height="4" fill="#1f5a96" />
              <path d="M10 8h9M10 10.500h9M0 3h5M2 6h3M0 9h5M2 12h3" stroke="#888" />
            </svg>
            <span className="mt-[9px]">Envoyer</span>
          </div>
          <div className="ml-[11px] flex min-w-0 flex-1 flex-col">
            <div className="flex h-[26px]">
              <div className="flex h-[26px] w-[69px] items-center justify-center border border-[#ababab] text-[11px] text-[#555]">À...</div>
              <div className="ml-[11px] mt-[2px] flex h-[21px] flex-1 items-center border border-[#0072c6] pl-[3px] text-[10.75px] text-black underline">hn8An8Biccs-alert@mail2sms.smsmarkt.com;</div>
            </div>
            <div className="mt-[4px] flex h-[26px]">
              <div className="flex h-[26px] w-[69px] items-center justify-center border border-[#ababab] text-[11px] text-[#555]">Cc...</div>
              <div className="ml-[11px] mt-[3px] h-[21px] flex-1 border border-[#ababab]" />
            </div>
            <div className="mt-[5px] flex h-[21px]">
              <div className="flex w-[69px] items-center pl-[1px] pt-[2px] text-[11px] text-[#666]">Objet</div>
              <div className="ml-[11px] h-[21px] flex-1 border border-[#ababab]" />
            </div>
          </div>
        </div>
        <div className="min-h-0 flex-1 border border-b-0 border-[#ababab]" />
        <div className="pointer-events-none absolute left-[146px] top-[4px] h-[45px] w-[249px] border-[5px] border-[#f58233]" />
        <svg viewBox="0 0 92 16" className="pointer-events-none absolute left-[409px] top-[20px] h-[16px] w-[92px]">
          <path d="M0 8L18 0v5l30-1 43-2-10 6 10 6-43-2-30 1v4z" fill="#f58233" />
        </svg>
      </div>
    </div>
  );
}

export default function App() {
  return (
    <div className="flex h-[859px] w-full flex-col overflow-hidden bg-white font-['Open_Sans',sans-serif] text-[11.5px]">
      <OuterWindow />
      <div className="flex min-h-0 flex-1">
        <Sidebar />
        <ComposeWindow />
      </div>
    </div>
  );
}
